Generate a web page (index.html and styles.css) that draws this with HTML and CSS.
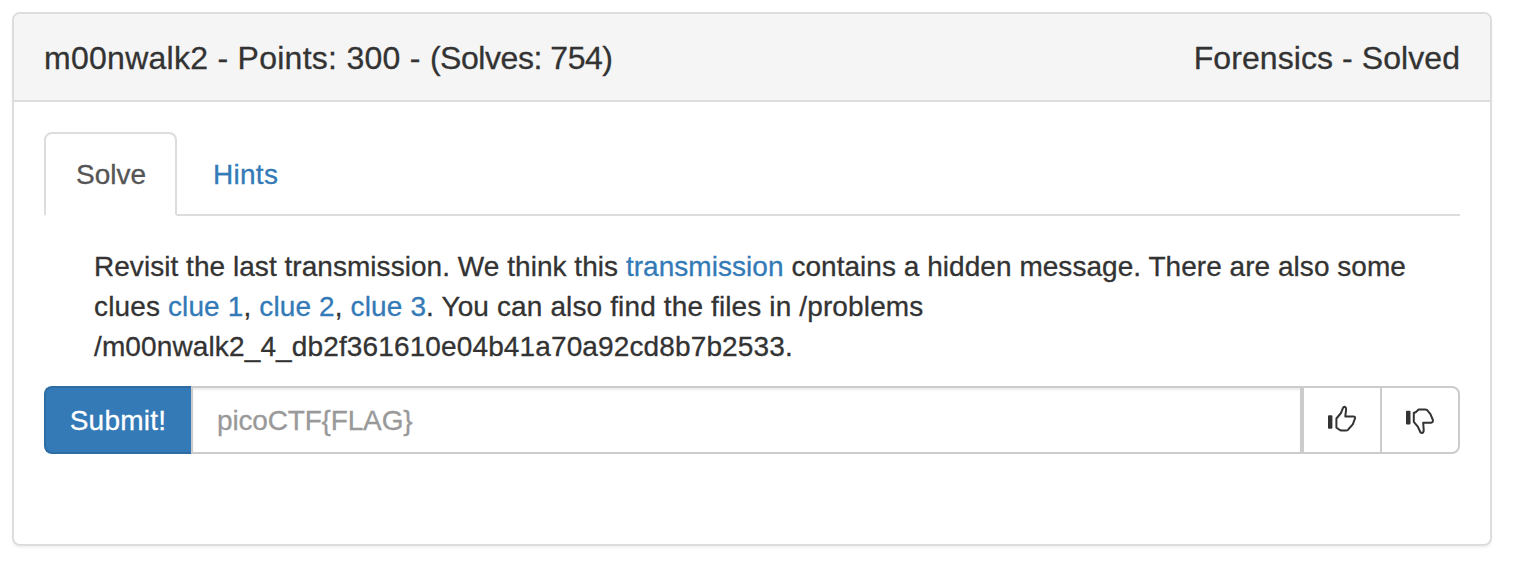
FILE: index.html
```
<!DOCTYPE html>
<html lang="en">
<head>
<meta charset="utf-8">
<title>m00nwalk2</title>
<link rel="stylesheet" href="styles.css">
</head>
<body>
<section class="panel">
  <header class="panel-heading">
    <h4 class="title"><span class="name">m00nwalk2 - Points: 300 - </span><span class="solves">(Solves: 754)</span></h4>
    <h4 class="status">Forensics - Solved</h4>
  </header>
  <div class="panel-body">
    <nav class="tabs">
      <a class="tab active">Solve</a>
      <a class="tab hints">Hints</a>
    </nav>
    <p class="description">
      <span class="line line-1">Revisit the last transmission. We think this <a>transmission</a> contains a hidden message. There are also some</span>
      <span class="line line-2">clues <a>clue 1</a>, <a>clue 2</a>, <a>clue 3</a>. You can also find the files in /problems</span>
      <span class="line line-3">/m00nwalk2_4_db2f361610e04b41a70a92cd8b7b2533.</span>
    </p>
    <form class="input-group">
      <button class="submit" type="button">Submit!</button>
      <input class="flag" type="text" placeholder="picoCTF{FLAG}">
      <button class="vote" type="button" aria-label="Like">
        <svg class="icon" viewBox="17 5 30 30"><rect class="cuff" x="18" y="15.3" width="4.4" height="13.4" rx="1"/><path class="hand" d="M26.4 18.5 L31 13 L32.8 8.3 Q33.6 6.5 35.2 7 Q36.4 7.8 36.1 9.5 L35.3 16.4 H43.6 Q45.8 16.6 44.8 19 L42.8 24.4 L38.6 29 Q38 30.6 36 30.6 H31.2 L28.8 29.3 L26.4 27.6 Z"/></svg>
      </button>
      <button class="vote last" type="button" aria-label="Dislike">
        <svg class="icon" viewBox="15 5 30 30"><rect class="cuff" x="16" y="10.7" width="4.5" height="13.8" rx="1"/><path class="hand" d="M23.8 13 L26 12 L28.6 9.6 H35.2 Q37.3 9.4 38.5 11.8 L40.3 13.8 L42.9 20 Q43.3 22.4 41 22.7 H33.2 L33.7 30 Q33.7 32.8 32 33 Q30.3 33 29.6 30.5 L27.8 26.6 L23.8 21.8 Z"/></svg>
      </button>
    </form>
  </div>
</section>
</body>
</html>
```
FILE: styles.css
```
* { box-sizing: border-box; }
body {
  margin: 0;
  padding: 12px;
  background: #fff;
  color: #333;
  font: 28px/40px "Liberation Sans", Arial, sans-serif;
  -webkit-text-stroke: .3px;
}
.panel {
  width: 1480px;
  height: 534px;
  border: 2px solid #ddd;
  border-radius: 8px;
  box-shadow: 0 2px 2px rgba(0, 0, 0, .05);
}
.panel-heading {
  display: flex;
  justify-content: space-between;
  height: 88px;
  padding: 26px 30px;
  background: #f5f5f5;
  border-bottom: 2px solid #ddd;
  border-radius: 6px 6px 0 0;
}
.title, .status {
  margin: 0;
  font-size: 32px;
  font-weight: 400;
  line-height: 36px;
  white-space: nowrap;
}
.name { letter-spacing: .27px; }
.solves { letter-spacing: -.45px; }
.status { letter-spacing: .07px; }
.panel-body { padding: 30px; }
.tabs {
  display: flex;
  gap: 4px;
  height: 84px;
  border-bottom: 2px solid #ddd;
}
.tab {
  width: 133px;
  height: 84px;
  padding: 21px 30px 19px;
  border: 2px solid transparent;
  border-radius: 8px 8px 0 0;
  white-space: nowrap;
}
.tab.active {
  color: #555;
  background: #fff;
  border-color: #ddd #ddd transparent;
}
a { color: #337ab7; }
.hints { letter-spacing: .28px; }
.description { margin: 31px 0 19px; padding-left: 50px; }
.line { display: block; width: max-content; white-space: nowrap; }
.line-1 { letter-spacing: .04px; }
.line-2, .line-3 { letter-spacing: .13px; }
.input-group { display: flex; height: 68px; }
.submit, .flag, .vote {
  height: 68px;
  margin: 0;
  font: inherit;
}
.submit {
  width: 148px;
  padding: 1px 2px 0 0;
  color: #fff;
  letter-spacing: .25px;
  background: #337ab7;
  border: 2px solid #2e6da4;
  border-right: 0;
  border-radius: 8px 0 0 8px;
}
.flag {
  flex: 1;
  min-width: 0;
  padding: 13px 24px 11px;
  border: 2px solid #ccc;
  margin-left: -1px;
  border-radius: 0;
  letter-spacing: -.17px;
  box-shadow: inset 0 2px 2px rgba(0, 0, 0, .075);
}
.flag::placeholder { color: #999; opacity: 1; }
.vote {
  display: flex;
  align-items: center;
  justify-content: center;
  width: 80px;
  padding: 0;
  background: #fff;
  border: 2px solid #ccc;
}
.vote.last { margin-left: -2px; border-radius: 0 8px 8px 0; }
.icon { width: 30px; height: 30px; }
.cuff { fill: #333; }
.hand { fill: none; stroke: #333; stroke-width: 2; stroke-linejoin: round; }
```
